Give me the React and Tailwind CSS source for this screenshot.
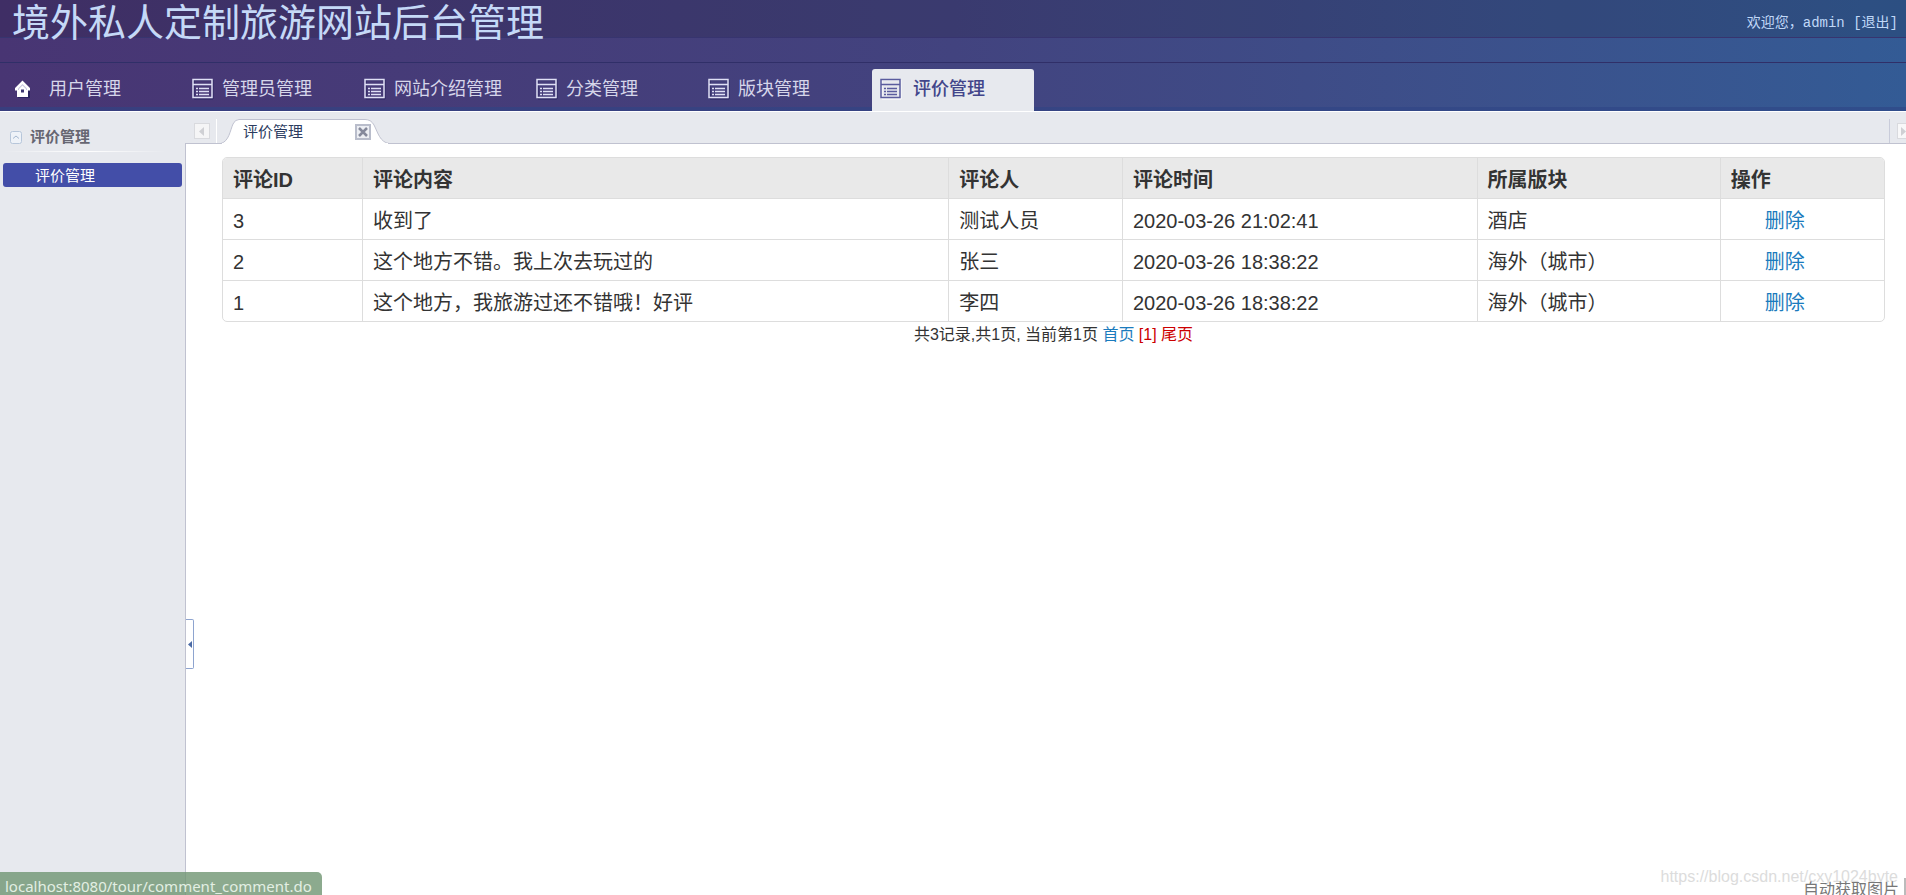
import React, { useState } from "react";

const menus = ["用户管理", "管理员管理", "网站介绍管理", "分类管理", "版块管理", "评价管理"];

const comments = [
  { id: 3, content: "收到了", user: "测试人员", time: "2020-03-26 21:02:41", block: "酒店" },
  { id: 2, content: "这个地方不错。我上次去玩过的", user: "张三", time: "2020-03-26 18:38:22", block: "海外（城市）" },
  { id: 1, content: "这个地方，我旅游过还不错哦！好评", user: "李四", time: "2020-03-26 18:38:22", block: "海外（城市）" },
];

function HomeIcon() {
  return (
    <svg width="18" height="18" viewBox="0 0 18 18" className="shrink-0">
      <path d="M4 10h12v8H4z" fill="#2b2560" />
      <path d="M8.500 0.500 1 8v2.500h2V17h11v-6.500h2V8z" fill="#fff" />
      <path d="M8.500 4 4 8.500V10h9V8.500z" fill="#c9c7de" />
      <path d="M8.500 5.500 5 9v6h7V9z" fill="#fff" />
      <path d="M7 9.500h3v3H7z" fill="#3b3570" />
    </svg>
  );
}

function ListIcon({ active }) {
  const color = active ? "#5a5c9e" : "#dfe0f5";
  const shade = active ? "#ffffff" : "#2a2760";
  return (
    <svg width="22" height="22" viewBox="0 0 22 22" className="shrink-0">
      <path d="M2 2h19v19H2z" fill="none" stroke={shade} />
      <path d="M1 1.500h19v18H1zM1 6.500h19" fill="none" stroke={color} strokeWidth="1.500" />
      <path d="M4 10.500h2M4 13.500h2M4 16.500h2M7 10.500h10M7 13.500h10M7 16.500h10" stroke={color} strokeWidth="1.500" />
    </svg>
  );
}

export default function App() {
  const [active, setActive] = useState("评价管理");
  const [sideOpen, setSideOpen] = useState(true);

  return (
    <div className="relative min-h-screen flex flex-col overflow-hidden bg-white font-['Liberation_Sans','Noto_Sans_CJK_SC',sans-serif]">
      <header className="bg-linear-to-r from-[#483573] via-[#42437f] to-[#335b95]">
        <div className="h-[37px] px-2 flex justify-between bg-black/12">
          <h1 className="pl-1 text-[38px] leading-[46px] whitespace-nowrap text-[#c5d9f7]">境外私人定制旅游网站后台管理</h1>
          <p className="pt-[13px] text-[14px] leading-5 text-[#c0d8f8] whitespace-pre font-['Liberation_Mono','Noto_Sans_CJK_SC',monospace]">
            欢迎您，admin <a href="#">[退出]</a>
          </p>
        </div>
        <div className="h-[26px] border-t border-b border-t-[#37346f] border-b-[#302f68]" />
        <nav className="h-12 pl-3 pt-[6px] flex gap-[10px] border-b-4 border-[#2f4486]/60">
          {menus.map((menu, i) => (
            <a
              key={menu}
              href="#"
              onClick={() => setActive(menu)}
              className={
                "w-[162px] h-[42px] pb-[3px] flex items-center text-[18px] leading-6 whitespace-nowrap rounded-t-[3px] " +
                (i === 0 ? "pl-[2px] gap-[17px] " : "pl-2 ") +
                (menu === active ? "gap-[11px] bg-[#e7e9ee] font-medium text-[#42458a]" : "gap-2 text-[#d6d6ea]")
              }
            >
              {i === 0 ? <HomeIcon /> : <ListIcon active={menu === active} />}
              {menu}
            </a>
          ))}
        </nav>
      </header>

      <div className="flex-1 flex border-t border-white bg-[#e7e9ee]">
        {sideOpen && (
          <aside className="w-[185px] shrink-0 px-[3px] pt-[11px]">
            <h2 className="h-7 pl-[7px] flex items-center gap-2 text-[15px] font-bold text-[#666672]">
              <svg width="12" height="13" viewBox="0 0 12 13">
                <rect x="0.500" y="0.500" width="11" height="12" rx="2" fill="#eef2f8" stroke="#b7c6da" />
                <path d="M3 7.500 6 5l3 2.500" fill="none" stroke="#a4b7cf" />
              </svg>
              评价管理
            </h2>
            <div className="h-px mr-4 mb-[11px] bg-linear-to-r from-transparent via-white to-transparent" />
            <a href="#" className="h-6 pl-8 pt-[2px] flex items-center rounded-[3px] bg-[#434ea8] text-[15px] leading-5 text-white">
              评价管理
            </a>
          </aside>
        )}

        <main className="flex-1 min-w-0 flex flex-col">
          <div className="h-8 flex items-end border-b border-[#c0c2d0] pl-[9px]">
            <button aria-label="向左滚动" className="w-4 h-4 mb-1 bg-[#f5f5f6] border border-[#d9dade] flex items-center justify-center">
              <svg width="6" height="9" viewBox="0 0 6 9"><path d="M5 0v9L0 4.500z" fill="#cfd0d4" /></svg>
            </button>
            <div className="w-px h-6 ml-[6px] bg-white" />
            <div className="relative w-[170px] h-6 mb-[-1px] ml-1 flex items-center">
              <svg width="170" height="25" viewBox="0 0 170 25" className="absolute bottom-0 left-0">
                <path d="M0 24.500C8 22 9 12 12 5Q14 0.500 18 0.500H144Q150 0.500 153 6C157 14 159 23 168 24.500" fill="#fff" stroke="#c0c2d0" />
                <path d="M1 24.500H167" stroke="#fff" />
              </svg>
              <span className="relative flex-1 pl-[22px] text-[15px] leading-6 text-[#2c3c60]">评价管理</span>
              <button aria-label="关闭" className="relative w-4 h-4 mr-5 border-2 border-[#b9bdcb] bg-[#eceef3] flex items-center justify-center">
                <svg width="10" height="10" viewBox="0 0 10 10"><path d="m1 1 8 8M9 1 1 9" stroke="#85899b" strokeWidth="2.500" /></svg>
              </button>
            </div>
            <div className="ml-auto w-px h-6 bg-[#c9ccda]" />
            <button aria-label="向右滚动" className="w-[9px] h-4 mb-1 ml-[7px] bg-[#f8f8f9] border border-r-0 border-[#d9dade] flex items-center justify-end">
              <svg width="5" height="9" viewBox="0 0 5 9"><path d="M0 0v9L5 4.500z" fill="#cfd0d4" /></svg>
            </button>
          </div>

          <div className="relative flex-1 pl-9 pr-[21px] pt-[13px] bg-white border-l border-[#c0c2d0]">
            <div className="border border-[#dddddd] rounded-[5px] overflow-hidden">
              <table className="w-full table-fixed text-left text-[20px] leading-5 text-[#333333]">
                <colgroup>
                  <col className="w-[8.400%]" />
                  <col className="w-[35.300%]" />
                  <col className="w-[10.450%]" />
                  <col className="w-[21.350%]" />
                  <col className="w-[14.650%]" />
                  <col />
                </colgroup>
                <thead>
                  <tr className="h-10 bg-[#e9e9e9] divide-x divide-[#dddddd]">
                    <th className="px-[10px] pt-1">评论ID</th>
                    <th className="px-[10px] pt-1">评论内容</th>
                    <th className="px-[10px] pt-1">评论人</th>
                    <th className="px-[10px] pt-1">评论时间</th>
                    <th className="px-[10px] pt-1">所属版块</th>
                    <th className="px-[10px] pt-1">操作</th>
                  </tr>
                </thead>
                <tbody>
                  {comments.map((c) => (
                    <tr key={c.id} className="h-[41px] border-t border-[#dddddd] divide-x divide-[#dddddd]">
                      <td className="px-[10px] pt-1">{c.id}</td>
                      <td className="px-[10px] pt-1">{c.content}</td>
                      <td className="px-[10px] pt-1">{c.user}</td>
                      <td className="px-[10px] pt-1">{c.time}</td>
                      <td className="px-[10px] pt-1">{c.block}</td>
                      <td className="pl-11 pt-1">
                        <a href="#" className="text-[#1b7bbd]">删除</a>
                      </td>
                    </tr>
                  ))}
                </tbody>
              </table>
            </div>
            <p className="pt-px text-center text-base leading-6 text-[#333333]">
              共3记录,共1页, 当前第1页 <a href="#" className="text-[#1b7bbd]">首页</a>{" "}
              <span className="text-[#cc0000]">[1] 尾页</span>
            </p>
            <button
              aria-label="收起菜单"
              onClick={() => setSideOpen(!sideOpen)}
              className="absolute left-0 top-[475px] w-2 h-[50px] bg-white border border-l-0 border-[#8ea4cf] rounded-r-[2px] flex items-center justify-center"
            >
              <svg width="4" height="7" viewBox="0 0 4 7"><path d="M4 0v7L0 3.500z" fill="#4a6aa5" /></svg>
            </button>
          </div>
        </main>
      </div>

      <div className="absolute bottom-0 left-0 h-[23px] pl-[5px] pr-[10px] rounded-tr-[5px] bg-[#6f9572]/80 text-[15px] leading-7 whitespace-nowrap text-[#e3efe3] font-['Noto_Sans',sans-serif]">
        localhost:8080/tour/comment_comment.do
      </div>
      <div className="absolute bottom-[6px] right-[8px] text-[16px] leading-6 text-[#dcdcdc]">https://blog.csdn.net/cxy1024byte</div>
      <div className="absolute bottom-0 right-0 h-[17px] pl-[6px] pr-[5px] overflow-hidden border-r-2 border-[#bbbbbb] text-[16px] leading-6 text-[#777777]">
        自动获取图片
      </div>
    </div>
  );
}
